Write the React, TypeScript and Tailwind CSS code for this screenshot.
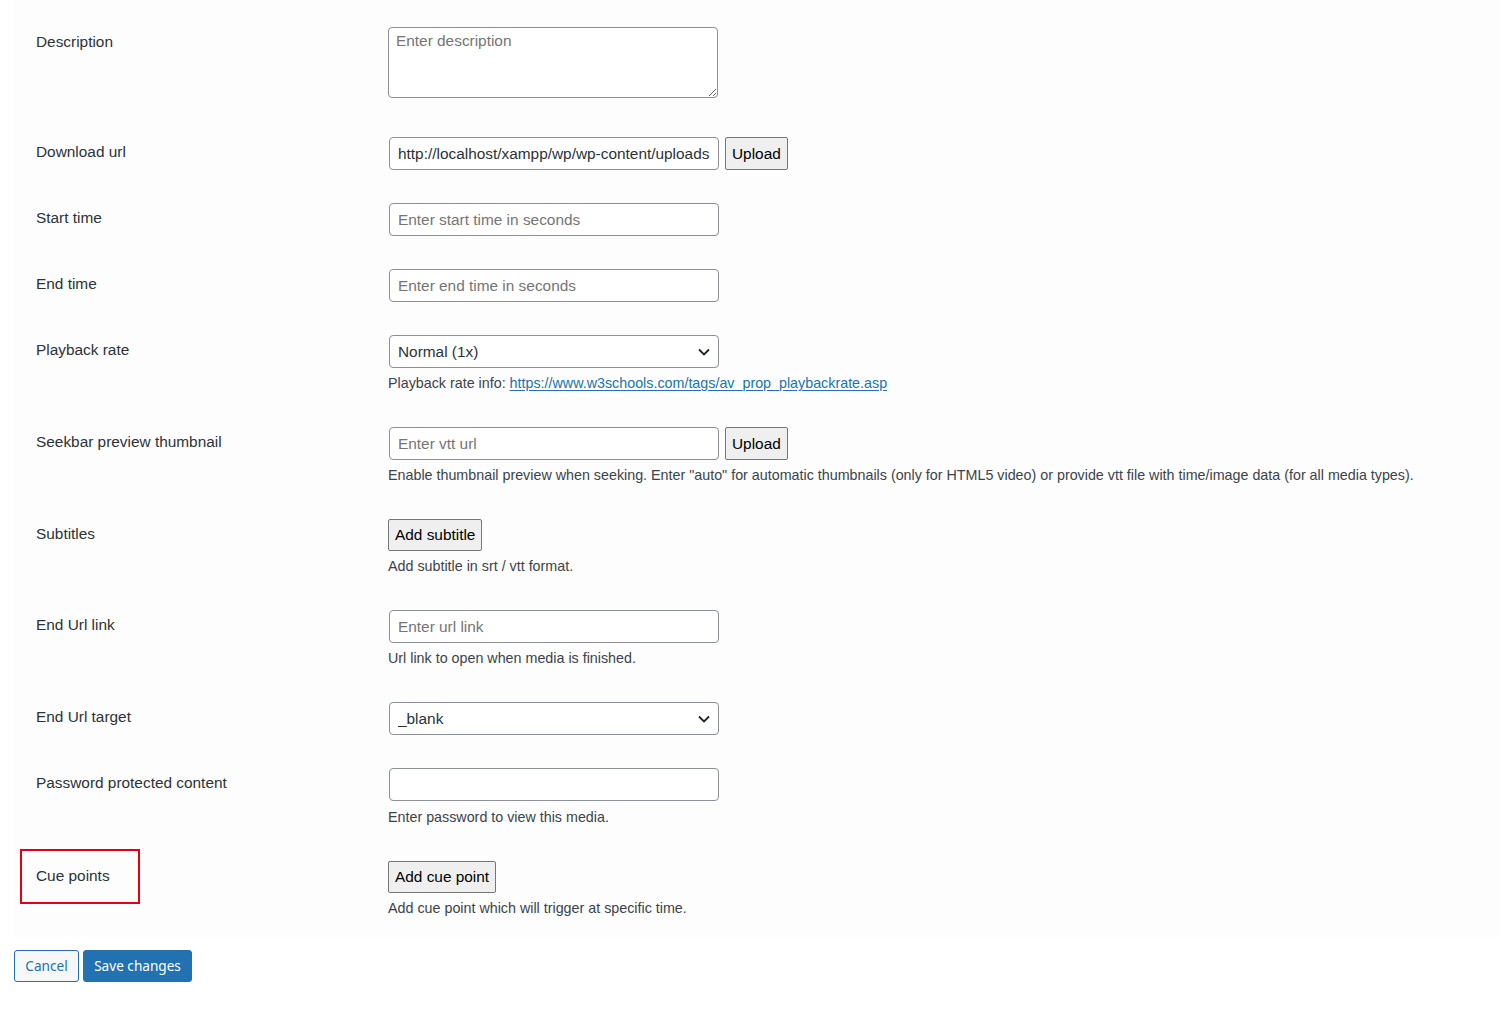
import type { ReactNode } from 'react';

const inputCls =
  'ml-px block h-[33px] w-[330px] rounded-[4px] border border-[#8c8f94] bg-white px-[8px] text-[15.4px] text-[#2c3338] placeholder:text-[#757575] outline-none';

const btnCls =
  'rounded-[2px] border border-[#767676] bg-[#efefef] px-[6px] text-[15.4px] text-black';

function Help({ children }: { children: ReactNode }) {
  return (
    <p className="mt-[4px] text-[14.3px] leading-[22px] text-[#3c434a]">
      {children}
    </p>
  );
}

function Row({
  label,
  children,
  first = false,
  marked = false,
}: {
  label: string;
  children: ReactNode;
  first?: boolean;
  marked?: boolean;
}) {
  return (
    <div className={first ? 'flex pt-[15px] pb-[24px]' : 'flex pt-[15px] pb-[18px]'}>
      <div className="relative w-[352px] shrink-0">
        <div className="mt-[5px] text-[15.4px] leading-[20px] text-[#2c3338]">
          {label}
        </div>
        {marked && (
          <div className="pointer-events-none absolute -top-[12px] -left-[16px] h-[55px] w-[120px] border-2 border-[#e3000f]" />
        )}
      </div>
      <div className="min-w-0 flex-1">{children}</div>
    </div>
  );
}

function Select({ value }: { value: string }) {
  return (
    <div className="relative ml-px w-[330px]">
      <select
        defaultValue={value}
        className="block h-[33px] w-full appearance-none rounded-[4px] border border-[#8c8f94] bg-white px-[8px] text-[15.4px] text-[#2c3338] outline-none"
      >
        <option>{value}</option>
      </select>
      <svg
        className="pointer-events-none absolute top-[13px] right-[9px]"
        width="12"
        height="8"
        viewBox="0 0 12 8"
        fill="none"
      >
        <path d="M1 1.5l5 5 5-5" stroke="#1d2327" strokeWidth="1.8" />
      </svg>
    </div>
  );
}

export default function App() {
  return (
    <div className="min-h-[1014px] bg-white pl-[13px] font-['Liberation_Sans',Arial,sans-serif]">
      <div className="bg-[#fdfdfd] pt-[12px] pl-[23px]">
        <Row label="Description" first>
          <textarea
            placeholder="Enter description"
            className="block h-[71px] w-[330px] rounded-[4px] border border-[#8c8f94] bg-white px-[7px] py-[2px] text-[15.4px] leading-[22px] text-[#2c3338] placeholder:text-[#757575] outline-none"
          />
        </Row>

        <Row label="Download url">
          <div className="flex items-center gap-[6px]">
            <input
              className={inputCls}
              defaultValue="http://localhost/xampp/wp/wp-content/uploads"
            />
            <button type="button" className={`${btnCls} h-[33px]`}>
              Upload
            </button>
          </div>
        </Row>

        <Row label="Start time">
          <input className={inputCls} placeholder="Enter start time in seconds" />
        </Row>

        <Row label="End time">
          <input className={inputCls} placeholder="Enter end time in seconds" />
        </Row>

        <Row label="Playback rate">
          <Select value="Normal (1x)" />
          <Help>
            Playback rate info:{' '}
            <a
              href="#"
              className="text-[#2271b1] underline underline-offset-2"
            >
              https://www.w3schools.com/tags/av_prop_playbackrate.asp
            </a>
          </Help>
        </Row>

        <Row label="Seekbar preview thumbnail">
          <div className="flex items-center gap-[6px]">
            <input className={inputCls} placeholder="Enter vtt url" />
            <button type="button" className={`${btnCls} h-[33px]`}>
              Upload
            </button>
          </div>
          <Help>
            Enable thumbnail preview when seeking. Enter "auto" for automatic
            thumbnails (only for HTML5 video) or provide vtt file with
            time/image data (for all media types).
          </Help>
        </Row>

        <Row label="Subtitles">
          <button type="button" className={`${btnCls} block h-[32px]`}>
            Add subtitle
          </button>
          <Help>Add subtitle in srt / vtt format.</Help>
        </Row>

        <Row label="End Url link">
          <input className={inputCls} placeholder="Enter url link" />
          <Help>Url link to open when media is finished.</Help>
        </Row>

        <Row label="End Url target">
          <Select value="_blank" />
        </Row>

        <Row label="Password protected content">
          <div className="pb-px">
            <input className={inputCls} type="text" />
          </div>
          <Help>Enter password to view this media.</Help>
        </Row>

        <Row label="Cue points" marked>
          <button type="button" className={`${btnCls} block h-[32px]`}>
            Add cue point
          </button>
          <Help>Add cue point which will trigger at specific time.</Help>
        </Row>
      </div>

      <div className="mt-[13px] flex gap-[4px] pl-px font-['Noto_Sans',sans-serif] text-[13.6px]">
        <button
          type="button"
          className="h-[32px] w-[65px] rounded-[3px] border border-[#2271b1] bg-[#f6f7f7] text-[#2271b1]"
        >
          Cancel
        </button>
        <button
          type="button"
          className="h-[32px] w-[109px] rounded-[3px] border border-[#2271b1] bg-[#2271b1] text-white"
        >
          Save changes
        </button>
      </div>
    </div>
  );
}
